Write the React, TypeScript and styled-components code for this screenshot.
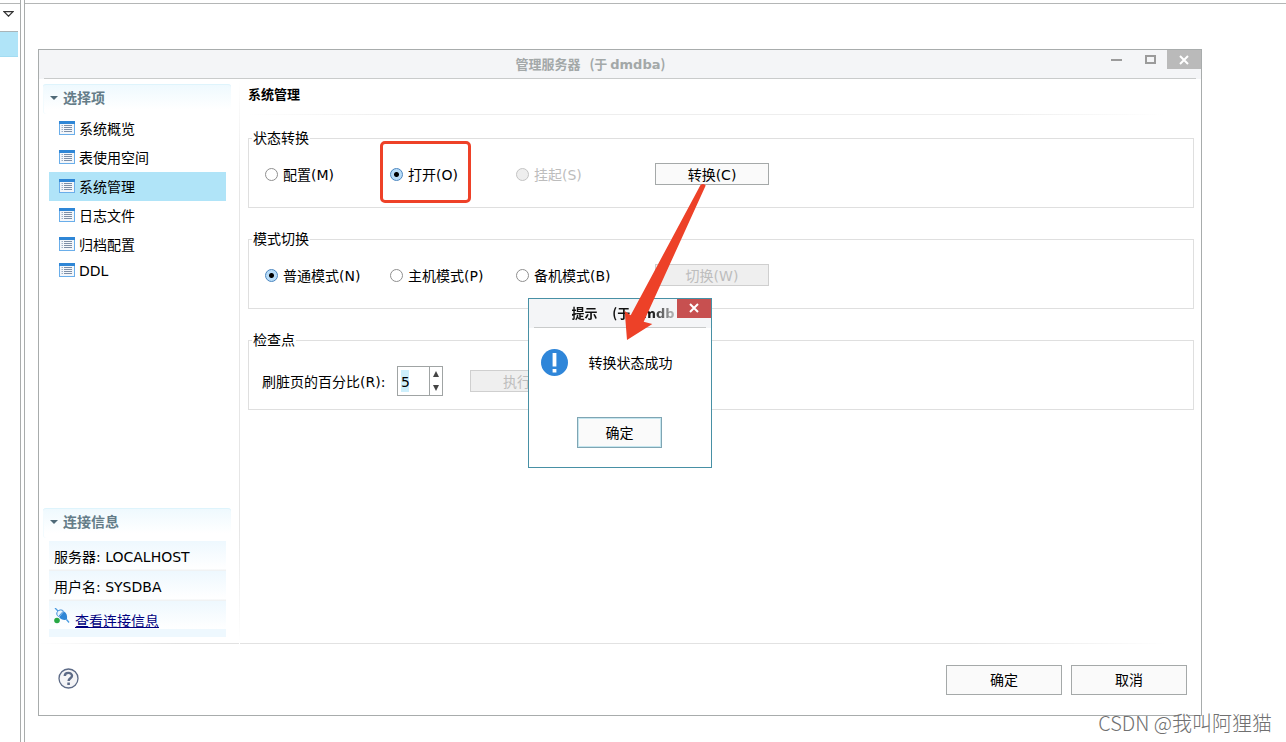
import React, { useState } from "react";
import styled, { createGlobalStyle, css } from "styled-components";

const GlobalStyle = createGlobalStyle`
  *, *::before, *::after { box-sizing: border-box; }
  body {
    margin: 0;
    background: #fff;
    color: #000;
    font: 14px/20px "DejaVu Sans", "Noto Sans CJK SC", sans-serif;
  }
  button, input { font: inherit; color: inherit; }
`;

const Desktop = styled.div`
  display: flex;
  gap: 3px;
  min-height: 100vh;
  position: relative;
`;

const Strip = styled.aside`
  flex: none;
  width: 21px;
  padding-top: 3px;
  border-right: 1px solid #a9acac;
`;

const StripTools = styled.div`
  height: 28px;
  padding: 7px 0 0 3px;
  border-top: 1px solid #b4b6b6;
`;

const StripMenu = styled.button`
  display: block;
  padding: 0;
  border: 0;
  background: none;
  svg { display: block; }
`;

const StripRow = styled.div`
  width: 18px;
  height: 26px;
  background: #b0e4f8;
  border-top: 1px solid #a9b4b8;
  border-bottom: 1px solid #a3dcf2;
`;

const Workspace = styled.main`
  flex: 1;
  min-width: 0;
  display: flex;
  padding-top: 3px;
  border-left: 1px solid #a9acac;
`;

const WorkspaceBody = styled.div`
  flex: 1;
  display: flex;
  padding: 45px 84px 26px 13px;
  border-top: 1px solid #b4b6b6;
`;

const Window = styled.section`
  position: relative;
  flex: 1;
  min-width: 0;
  display: flex;
  flex-direction: column;
  border: 1px solid #a8acac;
`;

const TitleBar = styled.header`
  display: flex;
  align-items: flex-start;
  height: 29px;
  padding-left: 43px;
  background: linear-gradient(#c9cbcb, #c9cbcb) 50% 100% / calc(100% - 10px) 1px no-repeat, #f4f5f7;
`;

const Title = styled.h1<{ $active?: boolean }>`
  flex: 1;
  min-width: 0;
  margin: 0;
  padding-top: 4px;
  text-align: center;
  white-space: pre;
  font: bold 13px/20px "Noto Sans CJK SC", sans-serif;
  color: #a3a8a8;
  span { font-family: "DejaVu Sans", sans-serif; }
  ${(p) =>
    p.$active &&
    css`
      color: #111;
      text-align: left;
      mask-image: linear-gradient(90deg, #000 75%, transparent 105%);
    `}
`;

const CaptionButton = styled.button<{ $fill?: string }>`
  flex: none;
  display: grid;
  place-items: center;
  width: 34px;
  height: 19px;
  padding: 0;
  border: 0;
  background: ${(p) => p.$fill ?? "none"};
`;

const Columns = styled.div`
  flex: 1;
  display: flex;
  background: linear-gradient(90deg, transparent, #e2e2e2 12%, #e2e2e2 80%, transparent 97%) 0 100% / 100% 1px no-repeat;
`;

const Sidebar = styled.nav`
  flex: none;
  width: 201px;
  display: flex;
  flex-direction: column;
  justify-content: space-between;
  padding: 5px 9px 7px 4px;
  background: linear-gradient(#fff, #e6e6e6 20%, #e6e6e6 80%, #fff) 100% 0 / 1px 100% no-repeat;
`;

const SectionHead = styled.h2`
  display: flex;
  align-items: center;
  gap: 5px;
  height: 30px;
  margin: 0;
  padding: 0 0 2px 7px;
  border-radius: 3px;
  background: linear-gradient(#eef9fe, #fff 85%);
  box-shadow: inset 0 1px 0 #def4fc, inset 1px 0 0 #f3fbfe;
  font-size: 14px;
  font-weight: bold;
  color: #647c88;
`;

const List = styled.ul`
  margin: 0;
  padding: 0 5px 0 6px;
  list-style: none;
`;

const Item = styled.button<{ $selected?: boolean; $short?: boolean }>`
  display: flex;
  align-items: center;
  gap: 4px;
  width: 100%;
  height: ${(p) => (p.$short ? 24 : 29)}px;
  padding: 0 0 2px 10px;
  border: 0;
  background: ${(p) => (p.$selected ? "#b0e4f8" : "none")};
  text-align: left;
  span { padding-top: 2px; }
  svg { flex: none; }
`;

const InfoList = styled.div`
  padding: 3px 5px 0 6px;
`;

const InfoRow = styled.div<{ $last?: boolean }>`
  display: flex;
  align-items: center;
  gap: 5px;
  height: ${(p) => (p.$last ? 36 : 30)}px;
  padding: ${(p) => (p.$last ? "0 5px" : "2px 5px 0")};
  white-space: pre;
  background: ${(p) =>
    p.$last
      ? "linear-gradient(#eef8fe, #fff 28px, #eef8fe 28px)"
      : "linear-gradient(#eef8fe, #fff 28px, #f0f2f3 29px)"};
  a { color: #000080; padding-top: 3px; text-underline-offset: 1px; }
  svg { flex: none; margin-bottom: 6px; }
`;

const Content = styled.div`
  flex: 1;
  min-width: 0;
  display: flex;
  flex-direction: column;
  gap: 21px;
  padding: 5px 7px 0 8px;
`;

const PageTitle = styled.h2`
  height: 31px;
  margin: 0 0 -8px;
  padding-top: 1px;
  background: linear-gradient(90deg, transparent, #eee 15%, #eee 80%, transparent 97%) 0 100% / 100% 1px no-repeat;
  font-size: 13px;
  line-height: 20px;
  font-weight: bold;
`;

const Group = styled.fieldset`
  min-width: 0;
  height: 80px;
  margin: 0;
  padding: 0;
  border: 1px solid #dfdfdf;
  legend {
    height: 20px;
    margin-left: 3px;
    padding: 0 1px;
    line-height: 20px;
  }
`;

const OptionRow = styled.div`
  display: grid;
  grid-template-columns: 125px 126px 139px 114px;
  align-items: center;
  height: 52px;
  padding-left: 16px;
`;

const PercentRow = styled.div`
  display: flex;
  align-items: center;
  height: 58px;
  padding: 4px 0 0 13px;
  label { width: 135px; padding-top: 2px; white-space: nowrap; }
`;

const RadioLabel = styled.label<{ $off?: boolean; $marked?: boolean }>`
  position: relative;
  display: flex;
  align-items: center;
  gap: 5px;
  white-space: nowrap;
  color: ${(p) => (p.$off ? "#bdbdbd" : "inherit")};
  span { padding-top: 2px; }
  ${(p) =>
    p.$marked &&
    css`
      &::after {
        content: "";
        position: absolute;
        left: -10px;
        top: -22px;
        width: 91px;
        height: 62px;
        border: 3px solid #ee4128;
        border-radius: 5px;
      }
    `}
`;

const Radio = styled.input`
  appearance: none;
  width: 13px;
  height: 13px;
  margin: 0;
  border: 1px solid #8f8f8f;
  border-radius: 50%;
  background: #fff;
  &:checked {
    border-color: #4a86c0;
    background: radial-gradient(circle, #000 0 2px, #b8dcf8 3px 100%);
  }
  &:disabled { border-color: #c4c4c4; background: #eee; }
`;

const PushButton = styled.button<{ $size?: "large" | "default" }>`
  width: 114px;
  height: 22px;
  padding: 1px 0 0;
  border: 1px solid #a5a9a9;
  background: #fafafa;
  line-height: 18px;
  &:disabled { border-color: #cfcfcf; background: #efefef; color: #bdbdbd; }
  ${(p) => p.$size === "large" && css`width: 116px; height: 30px;`}
  ${(p) =>
    p.$size === "default" &&
    css`
      width: 85px;
      height: 31px;
      border-color: #7fa5b3;
      box-shadow: inset 0 0 0 1px #c5e6ef;
    `}
`;

const Spinner = styled.div`
  display: flex;
  width: 46px;
  height: 30px;
  margin-right: 27px;
  border: 1px solid #a0a4a4;
  background: #fff;
`;

const SpinField = styled.input`
  width: 31px;
  padding: 2px 3px 0;
  border: 0;
  outline: 0;
  background: linear-gradient(#cdeffc, #cdeffc) 3px 50% / 8px 22px no-repeat;
`;

const SpinButtons = styled.div`
  flex: 1;
  display: grid;
  grid-template-rows: 1fr 1fr;
  border-left: 1px solid #a0a4a4;
  button {
    display: grid;
    place-items: center;
    padding: 0;
    border: 0;
    background: none;
  }
`;

const Footer = styled.footer`
  display: flex;
  align-items: center;
  gap: 9px;
  height: 71px;
  padding: 0 14px 0 19px;
`;

const HelpButton = styled.button`
  margin: 0 auto 2px 0;
  padding: 0;
  border: 0;
  background: none;
  svg { display: block; }
`;

const Overlay = styled.div`
  position: absolute;
  inset: 0;
  display: grid;
  place-items: center;
  padding-right: 1px;
  pointer-events: none;
`;

const Popup = styled.div`
  position: relative;
  width: 184px;
  border: 1px solid #4790a5;
  background: #fff;
  pointer-events: auto;
`;

const Message = styled.div`
  display: flex;
  align-items: center;
  gap: 21px;
  padding: 21px 12px 0;
  p { margin: 0; padding-top: 2px; }
  svg { flex: none; }
`;

const PopupActions = styled.div`
  display: flex;
  justify-content: center;
  padding: 41px 0 19px;
`;

const Arrow = styled.svg`
  position: absolute;
  left: 95px;
  top: -117px;
  pointer-events: none;
`;

const Watermark = styled.div`
  position: absolute;
  right: 14px;
  bottom: 5px;
  font: 300 20px/28px "Noto Sans CJK SC", sans-serif;
  color: #707070;
  text-shadow: 1px 1px 0 #fff;
  white-space: nowrap;
`;

const ListIcon = () => (
  <svg width="16" height="14" viewBox="0 0 16 14">
    <rect width="16" height="14" fill="#6aaeea" />
    <rect width="16" height="3" fill="#2f86d6" />
    <rect x="1" y="3" width="14" height="10" fill="#f3f6fa" />
    <path d="M5 4.5h8M5 6.5h8M5 8.5h8M5 10.5h8" stroke="#7d8ea6" />
    <path d="M2.5 4.5h1.5M2.5 6.5h1.5M2.5 8.5h1.5M2.5 10.5h1.5" stroke="#9fb0c6" />
  </svg>
);

const Twistie = () => (
  <svg width="8" height="4" viewBox="0 0 8 4">
    <path d="M0 0h8L4 4z" fill="#4f6a78" />
  </svg>
);

const Cross = () => (
  <svg width="10" height="10" viewBox="0 0 10 10">
    <path d="M1 1l8 8M9 1l-8 8" stroke="#fff" strokeWidth="2" />
  </svg>
);

const PlugIcon = () => (
  <svg width="16" height="16" viewBox="0 0 16 16">
    <path d="M1 0l3 3" stroke="#4a9be0" strokeWidth="1.3" />
    <path d="M3.5 3.5C5 1.5 8 1.5 9.5 3L4.5 8.5C2.5 7.5 2.3 5 3.5 3.5z" fill="#eaf5fd" stroke="#3a8bd8" />
    <path d="M10 3.5C12.5 5 13.5 7.5 13 11.5C10 12.5 7 11.5 5 9z" fill="#2f86d6" />
    <path d="M12.5 11.5l2.5 3" stroke="#4a9be0" strokeWidth="1.3" />
    <circle cx="3" cy="12.5" r="2.8" fill="#27a844" />
  </svg>
);

const PAGES = ["系统概览", "表使用空间", "系统管理", "日志文件", "归档配置", "DDL"];

const STATES = [
  { key: "M", text: "配置(M)" },
  { key: "O", text: "打开(O)", marked: true },
  { key: "S", text: "挂起(S)", off: true },
];

const MODES = [
  { key: "N", text: "普通模式(N)" },
  { key: "P", text: "主机模式(P)" },
  { key: "B", text: "备机模式(B)" },
];

type Option = { key: string; text: string; off?: boolean; marked?: boolean };

function Options({ name, options, value, onChange }: {
  name: string;
  options: Option[];
  value: string;
  onChange: (key: string) => void;
}) {
  return (
    <>
      {options.map((o) => (
        <RadioLabel key={o.key} $off={o.off} $marked={o.marked}>
          <Radio
            type="radio"
            name={name}
            checked={value === o.key}
            disabled={o.off}
            onChange={() => onChange(o.key)}
          />
          <span>{o.text}</span>
        </RadioLabel>
      ))}
    </>
  );
}

export default function App() {
  const [page, setPage] = useState("系统管理");
  const [state, setState] = useState("O");
  const [mode, setMode] = useState("N");
  const [percent, setPercent] = useState(5);

  return (
    <Desktop>
      <GlobalStyle />
      <Strip>
        <StripTools>
          <StripMenu aria-label="菜单">
            <svg width="11" height="6" viewBox="0 0 11 6">
              <path d="M1 .7h9L5.5 5.2z" fill="#fff" stroke="#333" strokeWidth="1.2" />
            </svg>
          </StripMenu>
        </StripTools>
        <StripRow />
      </Strip>

      <Workspace>
        <WorkspaceBody>
          <Window>
            <TitleBar>
              <Title>{"管理服务器   (于 "}<span>dmdba</span>)</Title>
              <CaptionButton aria-label="最小化">
                <svg width="11" height="3"><rect y="1" width="11" height="2" fill="#9b9b9b" /></svg>
              </CaptionButton>
              <CaptionButton aria-label="最大化">
                <svg width="11" height="9">
                  <rect x="1" y="1" width="9" height="7" fill="none" stroke="#9b9b9b" strokeWidth="2" />
                </svg>
              </CaptionButton>
              <CaptionButton aria-label="关闭" $fill="#bababa"><Cross /></CaptionButton>
            </TitleBar>

            <Columns>
              <Sidebar>
                <section>
                  <SectionHead><Twistie />选择项</SectionHead>
                  <List>
                    {PAGES.map((p) => (
                      <li key={p}>
                        <Item $selected={p === page} $short={p === "DDL"} onClick={() => setPage(p)}>
                          <ListIcon />
                          <span>{p}</span>
                        </Item>
                      </li>
                    ))}
                  </List>
                </section>
                <section>
                  <SectionHead><Twistie />连接信息</SectionHead>
                  <InfoList>
                    <InfoRow>服务器: LOCALHOST</InfoRow>
                    <InfoRow>用户名: SYSDBA</InfoRow>
                    <InfoRow $last>
                      <PlugIcon />
                      <a href="#connection">查看连接信息</a>
                    </InfoRow>
                  </InfoList>
                </section>
              </Sidebar>

              <Content>
                <PageTitle>{page}</PageTitle>
                <Group>
                  <legend>状态转换</legend>
                  <OptionRow>
                    <Options name="state" options={STATES} value={state} onChange={setState} />
                    <PushButton>转换(C)</PushButton>
                  </OptionRow>
                </Group>
                <Group>
                  <legend>模式切换</legend>
                  <OptionRow>
                    <Options name="mode" options={MODES} value={mode} onChange={setMode} />
                    <PushButton disabled>切换(W)</PushButton>
                  </OptionRow>
                </Group>
                <Group>
                  <legend>检查点</legend>
                  <PercentRow>
                    <label htmlFor="percent">刷脏页的百分比(R):</label>
                    <Spinner>
                      <SpinField
                        id="percent"
                        value={percent}
                        onChange={(e) => setPercent(Number(e.target.value) || 0)}
                      />
                      <SpinButtons>
                        <button aria-label="增加" onClick={() => setPercent(percent + 1)}>
                          <svg width="6" height="6"><path d="M3 0l3 6H0z" fill="#444" /></svg>
                        </button>
                        <button aria-label="减少" onClick={() => setPercent(percent - 1)}>
                          <svg width="6" height="6"><path d="M3 6l3-6H0z" fill="#444" /></svg>
                        </button>
                      </SpinButtons>
                    </Spinner>
                    <PushButton disabled>执行(E)</PushButton>
                  </PercentRow>
                </Group>
              </Content>
            </Columns>

            <Footer>
              <HelpButton aria-label="帮助">
                <svg width="21" height="21" viewBox="0 0 21 21">
                  <circle cx="10.5" cy="10.5" r="9.5" fill="#f4f4f6" stroke="#5c6a86" strokeWidth="1.3" />
                  <path
                    d="M6.8 8C6.8 3.9 14 3.9 14 7.8C14 10.3 10.6 10.2 10.6 13"
                    fill="none"
                    stroke="#5c6a86"
                    strokeWidth="2.4"
                  />
                  <rect x="9.3" y="14.5" width="2.6" height="2.5" fill="#5c6a86" />
                </svg>
              </HelpButton>
              <PushButton $size="large">确定</PushButton>
              <PushButton $size="large">取消</PushButton>
            </Footer>

            <Overlay>
              <Popup role="dialog" aria-label="提示">
                <TitleBar>
                  <Title as="h3" $active>{"提示     (于 "}<span>dmdb</span></Title>
                  <CaptionButton aria-label="关闭" $fill="#c75050"><Cross /></CaptionButton>
                </TitleBar>
                <Message>
                  <svg width="27" height="27" viewBox="0 0 27 27">
                    <circle cx="13.5" cy="13.5" r="13.5" fill="#2f86d9" />
                    <path d="M11.6 4h3.8v13.5h-3.8zM11.6 20h3.8v3.5h-3.8z" fill="#fff" />
                  </svg>
                  <p>转换状态成功</p>
                </Message>
                <PopupActions>
                  <PushButton $size="default">确定</PushButton>
                </PopupActions>
                <Arrow width="84" height="160" viewBox="0 0 84 160">
                  <path
                    d="M76.5 3Q79 .8 81.7 3.5L19.7 139.7L28.3 142L3 158L.7 129L6.7 133.3z"
                    fill="#ed4128"
                  />
                </Arrow>
              </Popup>
            </Overlay>
          </Window>
        </WorkspaceBody>
      </Workspace>
      <Watermark>CSDN @我叫阿狸猫</Watermark>
    </Desktop>
  );
}
